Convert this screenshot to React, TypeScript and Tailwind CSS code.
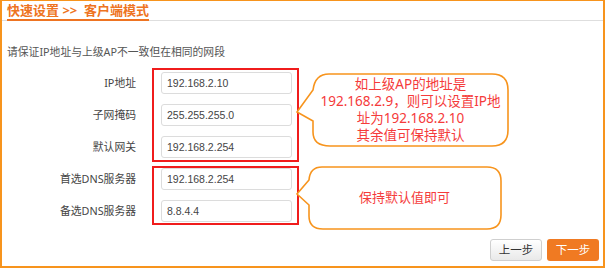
import React from 'react';

const cjk = '"Noto Sans", "Noto Sans CJK SC", sans-serif';
const latin = '"Liberation Sans", "Noto Sans CJK SC", sans-serif';

const groups = [
  [
    { label: 'IP地址', value: '192.168.2.10' },
    { label: '子网掩码', value: '255.255.255.0' },
    { label: '默认网关', value: '192.168.2.254' },
  ],
  [
    { label: '首选DNS服务器', value: '192.168.2.254' },
    { label: '备选DNS服务器', value: '8.8.4.4' },
  ],
];

function Field({ value }: { value: string }) {
  return (
    <div
      className="h-[22px] w-[131px] rounded-[3px] border border-[#dcdcdc] bg-white pl-[5px] text-[10.5px] leading-[20px] text-[#444]"
      style={{ fontFamily: latin }}
    >
      {value}
    </div>
  );
}

export default function App() {
  return (
    <div
      className="relative flex h-[268px] w-[605px] flex-col overflow-hidden border-2 border-t border-[#f7941d] bg-white"
      style={{ fontFamily: cjk }}
    >
      <div className="flex h-[20px] items-end border-b border-[#dedede] pl-[5px]">
        <span className="-mb-px border-b-2 border-[#ee7422] pb-[1px] text-[13px] font-bold leading-[16px] text-[#ee7422]">
          快速设置 &gt;&gt;&nbsp;&nbsp;客户端模式
        </span>
      </div>

      <p className="mt-[24px] pl-[5px] text-[10.8px] leading-[14px] text-[#555]">请保证IP地址与上级AP不一致但在相同的网段</p>

      <div className="mt-[9px] flex flex-col gap-[4px] pl-[5px]">
        {groups.map((g, gi) => (
          <div key={gi} className="flex">
            <div className={`flex w-[129px] flex-col items-end gap-[10px] ${gi === 0 ? 'pt-[4px]' : 'pt-[2px]'}`}>
              {g.map((f) => (
                <div key={f.label} className="flex h-[22px] items-center text-[10.8px] text-[#444]">
                  {f.label}
                </div>
              ))}
            </div>
            <div
              className={`ml-[16px] flex flex-col gap-[10px] border-2 border-[#f01c1c] pl-[7px] pr-[5px] ${gi === 0 ? 'py-[2px]' : 'pt-0 pb-px'}`}
            >
              {g.map((f) => (
                <Field key={f.label} value={f.value} />
              ))}
            </div>
          </div>
        ))}
      </div>

      <div className="mt-[14px] flex justify-end gap-[5px] pr-[4px]">
        <button className="h-[22px] w-[52px] rounded-[3px] border border-[#cfcfcf] bg-gradient-to-b from-white to-[#e9e9e9] text-[11.5px] text-[#333]">
          上一步
        </button>
        <button className="h-[22px] w-[52px] rounded-[3px] bg-[#f07a22] text-[11.5px] text-white">下一步</button>
      </div>

      {/* callout bubbles */}
      <svg className="pointer-events-none absolute -left-[2px] -top-px" width="605" height="268" fill="none">
        <path
          d="M329 74 H492 Q508 74 508 90 V130 Q508 146 492 146 H330 Q313 146 313 132 V121 L297 112 L313 90 Q315 74 329 74 Z"
          stroke="#f7941d"
          strokeWidth="1.6"
          fill="white"
        />
        <path
          d="M322 167 H487 Q501 167 501 181 V215 Q501 229 487 229 H323 Q309 229 309 216 V205 L297 194 L309 180 Q310 167 322 167 Z"
          stroke="#f7941d"
          strokeWidth="1.6"
          fill="white"
        />
      </svg>
      <div className="absolute left-[311px] top-[74px] flex h-[70px] w-[195px] flex-col items-center justify-center text-[13.5px] leading-[17px] text-[#f53b3b]">
        <span>如上级AP的地址是</span>
        <span>192.168.2.9，则可以设置IP地</span>
        <span>址为192.168.2.10</span>
        <span>其余值可保持默认</span>
      </div>
      <div className="absolute left-[306px] top-[166px] flex h-[62px] w-[193px] items-center justify-center text-[13px] text-[#f53b3b]">
        保持默认值即可
      </div>
    </div>
  );
}
